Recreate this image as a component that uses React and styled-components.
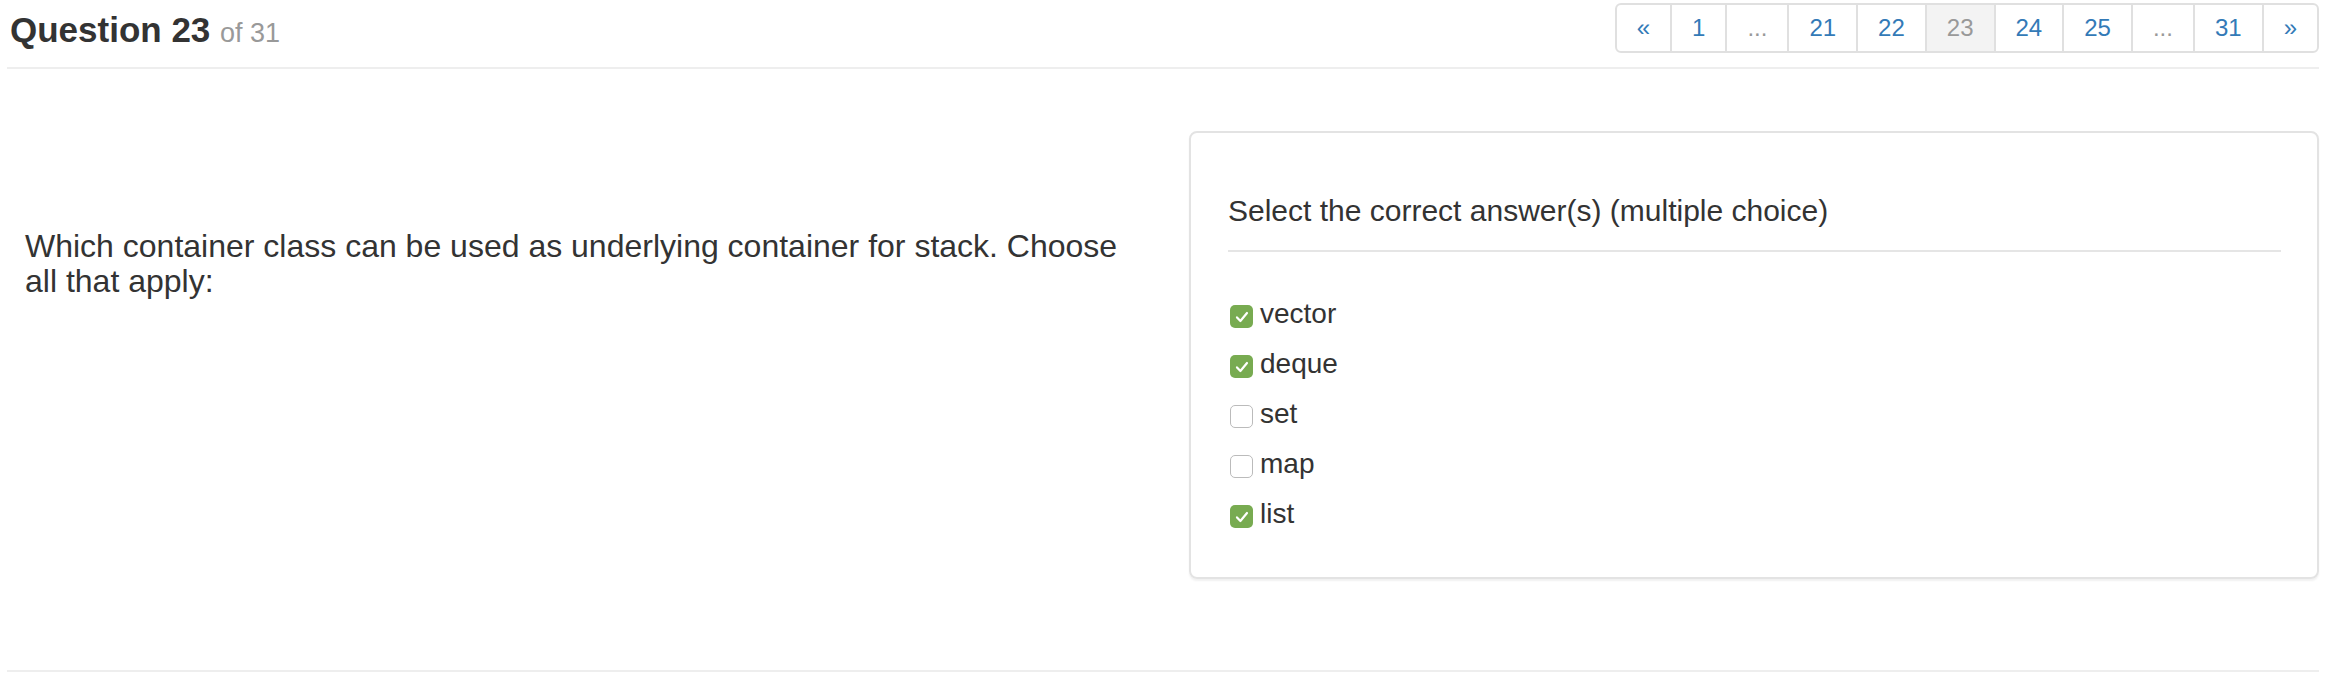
import React from 'react';
import styled, { createGlobalStyle } from 'styled-components';

const GlobalStyle = createGlobalStyle`
body {
margin: 0;
background: #fff;
color: #333;
font-family: "Liberation Sans", Arial, Helvetica, sans-serif;
}
`

const pages = [
    { label: '«' },
    { label: '1' },
    { label: '...', disabled: true },
    { label: '21' },
    { label: '22' },
    { label: '23', active: true },
    { label: '24' },
    { label: '25' },
    { label: '...', disabled: true },
    { label: '31' },
    { label: '»' },
]

const answers = [
    { text: 'vector', checked: true },
    { text: 'deque', checked: true },
    { text: 'set', checked: false },
    { text: 'map', checked: false },
    { text: 'list', checked: true },
]

const CheckMark = () => (
    <svg width="16" height="16" viewBox="0 0 16 16">
        <path d="M3 8.4 L6.4 12 L13 4" fill="none" stroke="#fff" strokeWidth="2.2" strokeLinecap="round" strokeLinejoin="round" />
    </svg>
)

const App = () => {
    return (
        <React.Fragment>
            <GlobalStyle />
            <Page>
                <Header>
                    <Title>Question 23 <small>of 31</small></Title>
                    <Pagination>
                        {pages.map((p, i) => (
                            <PageItem key={i} $active={p.active} $disabled={p.disabled}>{p.label}</PageItem>
                        ))}
                    </Pagination>
                </Header>
                <Rule />
                <Main>
                    <Question>
                        Which container class can be used as underlying container for stack. Choose all that apply:
                    </Question>
                    <Card>
                        <CardTitle>Select the correct answer(s) (multiple choice)</CardTitle>
                        <CardRule />
                        <Options>
                            {answers.map((a) => (
                                <Option key={a.text}>
                                    <Box $checked={a.checked}>{a.checked && <CheckMark />}</Box>
                                    {a.text}
                                </Option>
                            ))}
                        </Options>
                    </Card>
                </Main>
                <Rule />
            </Page>
        </React.Fragment>
    )
}

export default App;

const Page = styled.div`
padding: 0 9px 0 7px;
height: 692px;
box-sizing: border-box;
`

const Header = styled.header`
display: flex;
justify-content: space-between;
align-items: flex-start;
height: 67px;
padding: 3px 0 0 3px;
box-sizing: border-box;
`

const Title = styled.h1`
margin: 7px 0 0;
font-size: 35px;
line-height: 40px;
font-weight: bold;
color: #333;

small {
    font-size: 27px;
    font-weight: normal;
    color: #999;
}
`

const Pagination = styled.ul`
display: flex;
list-style: none;
margin: 0;
padding: 0;
`

const PageItem = styled.li`
height: 50px;
box-sizing: border-box;
padding: 0 20px;
line-height: 46px;
font-size: 24px;
border: 2px solid #e0e0e0;
margin-left: -2px;
background: ${p => p.$active ? '#f3f3f3' : '#fff'};
color: ${p => p.$active || p.$disabled ? '#999' : '#337ab7'};

&:first-child {
    margin-left: 0;
    border-radius: 6px 0 0 6px;
}
&:last-child {
    border-radius: 0 6px 6px 0;
}
`

const Rule = styled.hr`
margin: 0;
border: 0;
border-top: 2px solid #eee;
`

const Main = styled.main`
display: grid;
grid-template-columns: 1fr 1130px;
column-gap: 40px;
padding: 62px 0 0;
height: 601px;
box-sizing: border-box;
`

const Question = styled.p`
margin: 98px 0 0;
padding-left: 18px;
font-size: 32px;
line-height: 35px;
color: #333;
`

const Card = styled.section`
align-self: start;
border: 2px solid #e3e3e3;
border-radius: 8px;
box-shadow: 0 2px 2px rgba(0, 0, 0, 0.06);
padding: 61px 36px 36px 37px;
height: 448px;
box-sizing: border-box;
`

const CardTitle = styled.h2`
margin: 0;
font-size: 30px;
line-height: 34px;
font-weight: normal;
color: #333;
`

const CardRule = styled.hr`
margin: 22px 0 0;
border: 0;
border-top: 2px solid #e5e5e5;
`

const Options = styled.div`
display: flex;
flex-direction: column;
margin-top: 37px;
`

const Option = styled.label`
display: flex;
align-items: center;
height: 50px;
font-size: 28px;
color: #333;
`

const Box = styled.span`
display: inline-flex;
align-items: center;
justify-content: center;
width: 23px;
height: 23px;
margin: 5px 7px 0 2px;
box-sizing: border-box;
border-radius: 5px;
background: ${p => p.$checked ? '#78ab51' : '#fff'};
border: ${p => p.$checked ? 'none' : '1.5px solid #bbb'};
`
